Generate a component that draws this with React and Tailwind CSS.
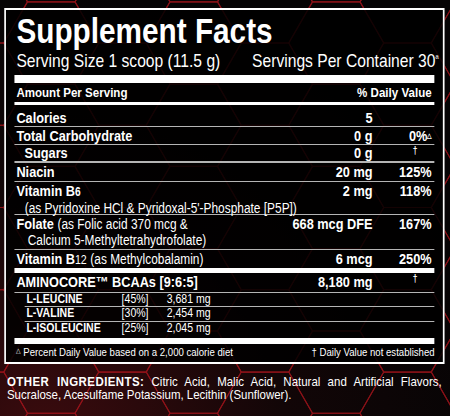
import React from 'react';

const HEX_S = 47.5;
const HEX_H = HEX_S * Math.sqrt(3) / 2;

const hexPoints = (cx, cy) =>
  [
    [cx - HEX_S, cy],
    [cx - HEX_S / 2, cy - HEX_H],
    [cx + HEX_S / 2, cy - HEX_H],
    [cx + HEX_S, cy],
    [cx + HEX_S / 2, cy + HEX_H],
    [cx - HEX_S / 2, cy + HEX_H]
  ]
    .map(p => p.join(','))
    .join(' ');

const HexBackground = () => {
  const hexes = [];
  for (let i = -7; i <= 1; i++) {
    for (let j = -1; j <= 6; j++) {
      const cx = 407.5 + i * 1.5 * HEX_S;
      const cy = 43 - HEX_H + j * 2 * HEX_H + (Math.abs(i) % 2 === 1 ? HEX_H : 0);
      hexes.push(<polygon key={`${i}-${j}`} points={hexPoints(cx, cy)} />);
    }
  }
  return (
    <svg className="absolute inset-0" width="450" height="416" viewBox="0 0 450 416">
      <g fill="none" stroke="#b3161e" strokeWidth="1.1" opacity="0.75">
        {hexes}
      </g>
    </svg>
  );
};

// the label uses a condensed look: the whole sheet is laid out wide and squeezed by scale-x
const Row = ({ className = '', amount, dv, below, children }) => (
  <div className={`whitespace-nowrap border-[#b4b4b4] ${className}`}>
    <div className="flex items-start">
      <div className="flex-1 pl-[2px]">{children}</div>
      <div className="text-right font-bold">{amount}</div>
      <div className="w-[73px] pr-[3.5px] text-right font-bold">{dv}</div>
    </div>
    {below}
  </div>
);

const Dagger = () => <span className="mr-[16.5px] align-top text-[10px] leading-[12px]">†</span>;

const SubRow = ({ className = '', name, pct, amount }) => (
  <div
    className={`grid grid-cols-[112px_53px_1fr] whitespace-nowrap border-[#b4b4b4] pl-[2px] text-[12.4px] leading-[12px] ${className}`}
  >
    <span className="font-bold">{name}</span>
    <span>{pct}</span>
    <span>{amount}</span>
  </div>
);

export default function App() {
  return (
    <div className="relative h-[416px] w-[450px] overflow-hidden bg-[radial-gradient(circle_at_10%_105%,#3b0b0e_0%,#120607_40%,#060405_75%)] font-['Liberation_Sans',Arial,sans-serif] text-white">
      <HexBackground />

      <div className="relative w-[529px] origin-top-left scale-x-[0.85]">
        {/* Facts panel */}
        <div className="ml-[4.7px] mt-[8px] w-[518px] border-2 border-white bg-black/85 pl-[10.6px] pr-[9.4px] pt-[3px]">
          <h1 className="pl-[2px] text-[35px] font-bold leading-[36px]">Supplement Facts</h1>
          <div className="flex justify-between whitespace-nowrap pl-[2px] text-[18.4px] leading-[24px]">
            <span>Serving Size 1 scoop (11.5 g)</span>
            <span className="-mr-[4.7px]">
              Servings Per Container 30<sup className="text-[10px]">ª</sup>
            </span>
          </div>
          <div className="mt-[2px] h-[8px] bg-white" />

          <div className="flex h-[22px] justify-between border-b-[3px] border-white pl-[2px] pr-[3.5px] text-[13.6px] font-bold leading-[19px]">
            <span>Amount Per Serving</span>
            <span>% Daily Value</span>
          </div>

          <div className="text-[15px] leading-[17px]">
            <Row className="h-[22px] border-b pt-[4px]" amount="5">
              <b>Calories</b>
            </Row>
            <Row
              className="h-[18px] border-b"
              amount="0 g"
              dv={
                <>
                  0%<sup className="text-[7px]">△</sup>
                </>
              }
            >
              <b>Total Carbohydrate</b>
            </Row>
            <Row className="h-[18px] border-b-2 leading-[16px]" amount="0 g" dv={<Dagger />}>
              <b className="pl-[9.5px]">Sugars</b>
            </Row>
            <Row className="h-[19px] border-b leading-[18px]" amount="20 mg" dv="125%">
              <b>Niacin</b>
            </Row>
            <Row
              className="h-[33px] border-b"
              amount="2 mg"
              dv="118%"
              below={
                <div className="pl-[11.8px] text-[14px] leading-[15px]">
                  (as Pyridoxine HCl &amp; Pyridoxal-5'-Phosphate [P5P])
                </div>
              }
            >
              <b>
                Vitamin B<span className="text-[12px]">6</span>
              </b>
            </Row>
            <Row
              className="h-[35px] border-b"
              amount="668 mcg DFE"
              dv="167%"
              below={<div className="pl-[15.3px] text-[14px] leading-[15px]">Calcium 5-Methyltetrahydrofolate)</div>}
            >
              <b>Folate</b> <span className="text-[14px]">(as Folic acid 370 mcg &amp;</span>
            </Row>
            <Row className="h-[18px]" amount="6 mcg" dv="250%">
              <b>
                Vitamin B<span className="text-[12.5px] font-normal">12</span>
              </b>{' '}
              <span className="text-[14px]">(as Methylcobalamin)</span>
            </Row>
            <div className="h-[5px] bg-white" />
            <Row className="h-[20px] border-b" amount="8,180 mg" dv={<Dagger />}>
              <b>AMINOCORE™ BCAAs [9:6:5]</b>
            </Row>

            <div className="ml-[11.8px]">
              <SubRow className="h-[14px] border-b" name="L-LEUCINE" pct="[45%]" amount="3,681 mg" />
              <SubRow className="h-[15px] border-b" name="L-VALINE" pct="[30%]" amount="2,454 mg" />
              <SubRow className="h-[16px]" name="L-ISOLEUCINE" pct="[25%]" amount="2,045 mg" />
            </div>
            <div className="h-[6px] bg-white" />
          </div>

          <div className="flex h-[18px] justify-between whitespace-nowrap pl-[2px] text-[11.3px] leading-[17px]">
            <span>
              <sup className="text-[7px]">△</sup> Percent Daily Value based on a 2,000 calorie diet
            </span>
            <span>† Daily Value not established</span>
          </div>
        </div>

        {/* Other ingredients */}
        <div className="ml-[8.2px] mr-[9.4px] mt-[12px] text-[13.5px] leading-[12.5px]">
          <div className="text-justify [text-align-last:justify]">
            <b className="tracking-[0.5px]">OTHER INGREDIENTS:</b> Citric Acid, Malic Acid, Natural and Artificial
            Flavors,
          </div>
          <div>Sucralose, Acesulfame Potassium, Lecithin (Sunflower).</div>
        </div>
      </div>
    </div>
  );
}
